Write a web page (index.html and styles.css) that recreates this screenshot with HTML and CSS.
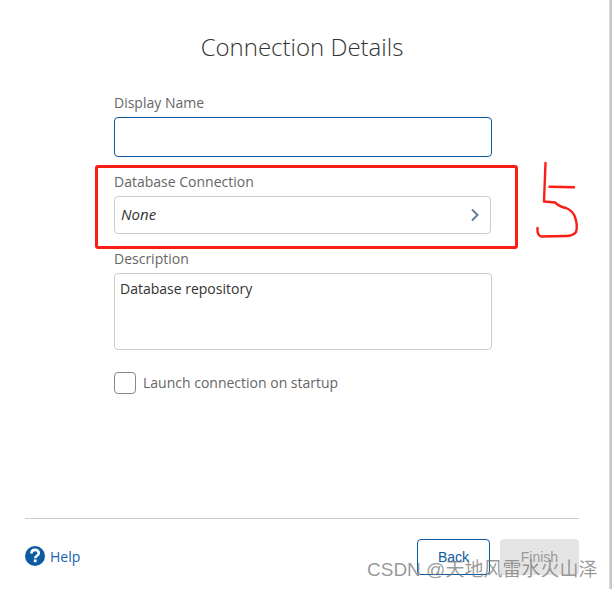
FILE: index.html
```html
<!DOCTYPE html>
<html lang="en">
<head>
  <meta charset="UTF-8" />
  <title>Connection Details</title>
  <link rel="stylesheet" href="styles.css">
</head>
<body>
  <div class="wizard">
    <h2 class="title">Connection Details</h2>
    <div class="form">
      <div class="field">
        <label class="field-label">Display Name</label>
        <div class="input input-focus"></div>
      </div>
      <div class="field">
        <label class="field-label">Database Connection</label>
        <div class="select">
          <span class="select-value">None</span>
          <svg class="chevron" width="10" height="14" viewBox="0 0 10 14"><path d="M2 1.5 L7.5 7 L2 12.5" fill="none" stroke="#5f7f9c" stroke-width="2"/></svg>
        </div>
      </div>
      <div class="field">
        <label class="field-label">Description</label>
        <div class="textarea">Database repository</div>
      </div>
      <label class="check-row">
        <span class="checkbox"></span>
        <span class="check-label">Launch connection on startup</span>
      </label>
    </div>
    <div class="footer">
      <a class="help">
        <svg width="20" height="20" viewBox="0 0 20 20"><circle cx="10" cy="10" r="10" fill="#0b5aa2"/><path d="M6.4 7.6 C6.4 5.4 8 3.9 10.1 3.9 C12.2 3.9 13.8 5.3 13.8 7.2 C13.8 9.7 10.2 9.7 10.2 12.2" fill="none" stroke="#fff" stroke-width="2.6"/><rect x="8.8" y="13.5" width="2.8" height="2.7" fill="#fff"/></svg>
        <span>Help</span>
      </a>
      <div class="buttons">
        <button class="btn btn-back">Back</button>
        <button class="btn btn-finish">Finish</button>
      </div>
    </div>
  </div>
  <div class="edge"></div>

  <!-- annotations on top of the screenshot -->
  <div class="red-box"></div>
  <svg class="scribble" width="60" height="90" viewBox="530 155 60 90">
    <path d="M545.5 163 L544 201.5 L555 202.5 Q560 207 566 208 Q573 211 575 217 Q578 226 576 232 Q573 236 566 236 L541 236.5 Q537 235 537.5 228" fill="none" stroke="#fa1e14" stroke-width="2.4" stroke-linecap="round" stroke-linejoin="round"/>
    <path d="M549.5 186.8 L574 187.3" fill="none" stroke="#fa1e14" stroke-width="2.4" stroke-linecap="round"/>
  </svg>
  <div class="watermark">CSDN @天地风雷水火山泽</div>
</body>
</html>
```

FILE: styles.css
```css
* {
  box-sizing: border-box;
}
html, body {
  margin: 0;
  height: 589px;
  overflow: hidden;
}
body {
  position: relative;
  background: #fff;
  font-family: "Open Sans", sans-serif;
  font-size: 14px;
  color: #333;
}
.wizard {
  width: 604px;
  height: 589px;
  padding: 0 25px;
  display: flex;
  flex-direction: column;
}
.title {
  margin: 30px 0 0;
  height: 33px;
  line-height: 33px;
  font-size: 24px;
  font-weight: 300;
  color: #333;
  text-align: center;
}
.form {
  width: 378px;
  margin: 30px 0 0 89px;
  flex: 1;
}
.field {
  margin-bottom: 15px;
}
.field-label {
  display: block;
  height: 20px;
  line-height: 20px;
  color: #666;
  margin-bottom: 4px;
}
.input {
  height: 40px;
  border: 1px solid #ccc;
  border-radius: 4px;
}
.input-focus {
  border-color: #0b5aa2;
}
.select {
  height: 38px;
  width: 377px;
  border: 1px solid #ccc;
  border-radius: 4px;
  padding: 0 10px 3px 6px;
  display: flex;
  align-items: center;
  justify-content: space-between;
}
.select-value {
  font-style: italic;
  font-size: 15px;
  color: #333;
}
.chevron {
  margin-top: 3px;
}
.textarea {
  height: 77px;
  border: 1px solid #ccc;
  border-radius: 4px;
  padding: 6px 5px;
  line-height: 18px;
  color: #333;
}
.check-row {
  display: flex;
  align-items: center;
  gap: 7px;
  margin-top: 21px;
}
.checkbox {
  width: 22px;
  height: 22px;
  margin-top: 1px;
  border: 1px solid #888;
  border-radius: 4px;
}
.check-label {
  color: #666;
}
.footer {
  border-top: 1px solid #ccc;
  height: 71px;
  flex: none;
  display: flex;
  justify-content: space-between;
  align-items: flex-start;
  padding-top: 20px;
}
.help {
  display: flex;
  align-items: center;
  gap: 5px;
  margin-top: 7px;
  color: #1a62b0;
}
.buttons {
  display: flex;
  gap: 10px;
}
.btn {
  width: 73px;
  height: 36px;
  border-radius: 4px;
  font-family: "Liberation Sans", Arial, sans-serif;
  font-size: 14px;
  padding: 0;
}
.btn-back {
  background: #fff;
  border: 1px solid #0b5aa2;
  color: #0b5aa2;
}
.btn-finish {
  width: 79px;
  background: #e4e4e4;
  border: none;
  color: #999;
}
.edge {
  position: absolute;
  left: 609px;
  top: 0;
  width: 3px;
  height: 589px;
  background: linear-gradient(to right, #dcdcdc, #bdbdbd);
}
.red-box {
  position: absolute;
  left: 95px;
  top: 165px;
  width: 423px;
  height: 84px;
  border: 3px solid #fa1e14;
  border-radius: 3px;
}
.scribble {
  position: absolute;
  left: 530px;
  top: 155px;
}
.watermark {
  position: absolute;
  left: 367px;
  top: 558px;
  font-family: "Liberation Sans", "Noto Sans CJK SC", sans-serif;
  font-size: 19px;
  line-height: 24px;
  color: rgba(120, 120, 120, 0.75);
  white-space: nowrap;
}
```
